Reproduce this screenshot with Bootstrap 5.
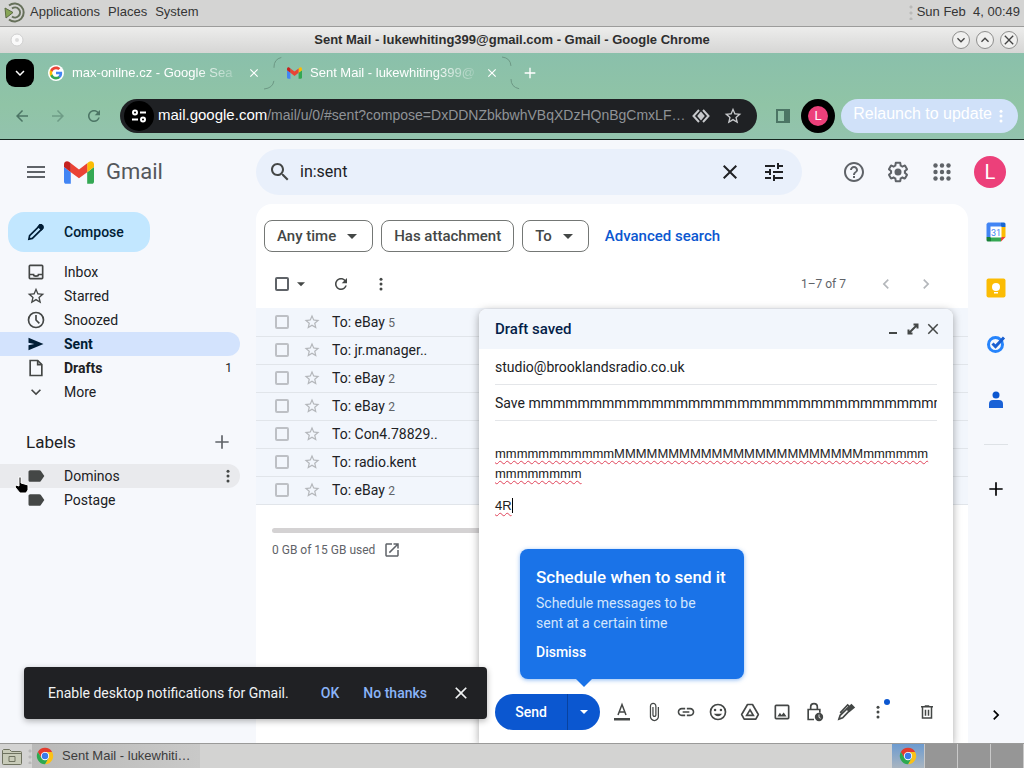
<!DOCTYPE html>
<html lang="en">
<head>
<meta charset="utf-8">
<meta name="viewport" content="width=device-width, initial-scale=1">
<title>Sent Mail - Gmail</title>
<link href="https://cdn.jsdelivr.net/npm/bootstrap@5.3.0/dist/css/bootstrap.min.css" rel="stylesheet">
<style>
  :root { --ink:#202124; --mute:#5f6368; --g:Roboto,"Noto Sans",sans-serif; --sys:"Liberation Sans",Arial,sans-serif; }
  body { font-family:var(--g); font-size:14px; line-height:20px; color:var(--ink); background:#f6f8fc; overflow:hidden; }
  svg { display:block; flex:none; }
  svg:not([fill]) { fill:currentColor; }
  button, input { font:inherit; color:inherit; }
  .btn { --bs-btn-font-size:14px; --bs-btn-line-height:20px; --bs-btn-padding-x:0; --bs-btn-padding-y:0; --bs-btn-border-width:0px; }
  .ib { display:inline-flex; align-items:center; justify-content:center; flex:none; color:inherit; border:0; background:none; padding:0; }
  .s16 { width:16px; height:16px; } .s18 { width:18px; height:18px; } .s20 { width:20px; height:20px; } .s24 { width:24px; height:24px; }
  .ib32 { width:32px; height:32px; } .ib40 { width:40px; height:40px; } .ib36 { width:36px; height:36px; }

  /* desktop panel and window frame */
  .sysbar { height:27px; background:#d4d4d3; border-bottom:1px solid #9c9c9b; font:13px/22px var(--sys); color:#353535; padding-bottom:2px; }
  .sysbar a { color:inherit; text-decoration:none; }
  .titlebar { height:26px; background:linear-gradient(#ededec,#d6d6d5); font:bold 13px/24px var(--sys); color:#2e2e2e; }
  .winbtn { width:18px; height:18px; border:1px solid #8e8e8d; border-radius:50%; background:#f0f0ef; color:#444; }
  .winbtns { gap:6px; padding-right:6px; }
  .grip { width:4px; height:16px; background:radial-gradient(circle,#b9b9b8 1px,transparent 2px) 0 0/4px 6px; }

  /* browser chrome */
  .chrome { background:linear-gradient(#8ac0ab,#90c4a6 60%,#93c3ae); color:#fff; border-bottom:1px solid #15251f; font-family:var(--sys); }
  .tabs { height:39px; padding-left:6px; }
  .tabsearch { width:28px; height:28px; border-radius:9px; background:#000; color:#fff; margin-right:14px; }
  .tabtext { font-size:13px; line-height:18px; white-space:nowrap; -webkit-mask-image:linear-gradient(90deg,#000 75%,rgba(0,0,0,.2) 100%); }
  .tabw { width:164px; }
  .tools { height:47px; color:#4c7565; padding:0 6px 0 4px; }
  .omni { height:34px; border-radius:17px; background:#1f2124; color:#c7c9cc; min-width:0; }
  .url { font:14px/20px var(--sys); color:#8f9397; white-space:nowrap; text-decoration:none; padding-bottom:2px; min-width:0; }
  .url b { color:#fff; font-weight:400; font-size:15px; }
  .siteinfo { width:30px; height:30px; border-radius:50%; background:#000; color:#fff; }
  .profile { width:34px; height:34px; border-radius:50%; background:#000; }
  .face { background:#ec407a; color:#fff; border-radius:50%; display:flex; align-items:center; justify-content:center; }
  .profile .face { font-size:13px; }
  .relaunch { height:34px; border-radius:17px; background:#d0e1f9; color:#fff; font-size:16px; margin-left:6px; }

  /* mail */
  .side { width:256px; flex:none; }
  .wordmark { font-size:22px; line-height:28px; color:#54575b; }
  .searchbox { height:46px; border-radius:23px; background:#e9f0fb; }
  .searchbox input { background:none; border:0; outline:0; font-size:16px; line-height:24px; min-width:0; }
  .compose { height:40px; border-radius:16px; background:#c2e7ff; color:#001d35; font-weight:500; width:142px; padding-left:18px; gap:18px; }
  .navrow { height:24px; margin-right:16px; padding:0 8px 0 26px; border-radius:0 12px 12px 0; color:var(--ink); text-decoration:none; display:flex; align-items:center; gap:18px; }
  .navrow svg { color:#444746; }
  .navrow.on { background:#d3e3fd; font-weight:700; color:#001d35; } .navrow.on svg { color:#001d35; }
  .navrow.hov { background:#e9eaed; padding-right:3px; }
  .heading { font-size:17px; line-height:28px; font-weight:400; }
  .sheet { background:#fff; border-radius:16px 16px 0 0; min-width:0; }
  .chip { height:32px; border:1px solid #747775; border-radius:8px; color:#444746; background:#fff; padding:0 12px; }
  .chip.pick { padding-right:10px; gap:6px; }
  .f15 { font-size:15px; font-weight:500; }
  .t12 { font-size:12px; line-height:16px; }
  .mails td { padding:0; height:28px; vertical-align:middle; border-bottom:1px solid #e1e5ea; }
  .mails { background:#f2f6fc; }
  .box { appearance:none; width:14px; height:14px; border:2px solid #bdc0c5; border-radius:2px; margin:0; display:block; flex:none; background:transparent; }
  .box.dark { border-color:#5f6368; }
  .faint { color:#b4b7bb; }
  .quota { height:5px; border-radius:3px; background:#d4d2d3; }
  .rail { width:56px; flex:none; }
  .railrow { height:56px; }

  /* compose window */
  .draft { position:absolute; right:71px; bottom:0; top:169px; width:474px; background:#fff; border-radius:8px 8px 0 0; box-shadow:0 2px 8px rgba(0,0,0,.35); }
  .drafthead { height:40px; background:#f2f6fc; border-radius:8px 8px 0 0; color:#041e49; padding:0 10px 0 16px; }
  .field { height:36px; border:0; border-bottom:1px solid #e4e6e9; outline:0; padding:1px 0 0; width:100%; border-radius:0; background:none; display:block; }
  .bodytext { font:13px/20px var(--sys); outline:0; padding-top:23px; color:#222; }
  .bodytext p + p { margin-top:12px; }
  .typo { text-decoration:underline wavy #e0445a 1px; text-underline-offset:2px; text-decoration-skip-ink:none; word-break:break-all; }
  .caret { border-right:1px solid #000; }
  .sendrow { height:50px; padding:0 16px 12px; color:#444746; }
  .fmt { padding-left:6px; }
  .sendbar { height:36px; border-radius:18px; background:#0b57d0; color:#fff; overflow:hidden; }
  .sendbar .main { width:72px; }
  .sendbar .more { border-left:1px solid #0842a0; width:33px; }
  .med { font-weight:500; }
  .tipbox { position:absolute; left:41px; bottom:64px; width:224px; height:130px; background:#1a73e8; color:#d2e5fc; border-radius:8px; box-shadow:0 1px 4px rgba(26,115,232,.5); }
  .tipbox::after { content:""; position:absolute; left:55px; bottom:-8px; border:9px solid transparent; border-top-color:#1a73e8; border-bottom:0; }
  .tipbox h2 { font-size:17px; line-height:24px; font-weight:500; color:#fff; white-space:nowrap; }
  .dot { position:absolute; right:4px; top:3px; width:6px; height:6px; border-radius:50%; background:#0b57d0; }
  .snack { position:absolute; left:24px; bottom:24px; height:52px; width:463px; background:#202124; color:#f1f3f4; border-radius:4px; box-shadow:0 2px 6px rgba(0,0,0,.3); }
  .snack .act { color:#8ab4f8; font-weight:500; }
  .pointer { position:absolute; left:14px; top:336px; }

  .taskbar { height:25px; background:#d3d3d2; border-top:1px solid #9a9a99; font:13px/22px var(--sys); color:#3c3c3c; }
  .task { width:168px; background:linear-gradient(90deg,#b9b9b8,#c9c9c8); }
  .desk { width:33px; background:#969696; border-right:1px solid #c9c9c9; }
  .desk.on { background:linear-gradient(#6c9bd0,#a9b5c0); }
</style>
</head>
<body class="vh-100 d-flex flex-column">

<svg width="0" height="0" class="position-absolute" aria-hidden="true">
  <symbol id="i-search" viewBox="0 0 24 24"><path d="M15.5 14h-.79l-.28-.27C15.41 12.59 16 11.11 16 9.5 16 5.91 13.09 3 9.5 3S3 5.91 3 9.5 5.91 16 9.5 16c1.61 0 3.09-.59 4.23-1.57l.27.28v.79l5 4.99L20.49 19l-4.99-5zm-6 0C7.01 14 5 11.99 5 9.5S7.01 5 9.5 5 14 7.01 14 9.5 11.99 14 9.5 14z"/></symbol>
  <symbol id="i-star" viewBox="0 0 24 24"><path d="M22 9.24l-7.19-.62L12 2 9.19 8.63 2 9.24l5.46 4.73L5.82 21 12 17.27 18.18 21l-1.63-7.03L22 9.24zM12 15.4l-3.76 2.27 1-4.28-3.32-2.88 4.38-.38L12 6.1l1.71 4.04 4.38.38-3.32 2.88 1 4.28L12 15.4z"/></symbol>
  <symbol id="i-refresh" viewBox="0 0 24 24"><path d="M17.65 6.35C16.2 4.9 14.21 4 12 4c-4.42 0-7.99 3.58-7.99 8s3.57 8 7.99 8c3.73 0 6.84-2.55 7.73-6h-2.08c-.82 2.33-3.04 4-5.65 4-3.31 0-6-2.69-6-6s2.69-6 6-6c1.66 0 3.14.69 4.22 1.78L13 11h7V4l-2.35 2.35z"/></symbol>
  <symbol id="i-more" viewBox="0 0 24 24"><circle cx="12" cy="5.500" r="2"/><circle cx="12" cy="12" r="2"/><circle cx="12" cy="18.500" r="2"/></symbol>
  <symbol id="i-close" viewBox="0 0 24 24"><path d="M19 6.41L17.59 5 12 10.59 6.41 5 5 6.41 10.59 12 5 17.59 6.41 19 12 13.41 17.59 19 19 17.59 13.41 12z"/></symbol>
  <symbol id="i-tune" viewBox="0 0 24 24"><path d="M3 17v2h6v-2H3zM3 5v2h10V5H3zm10 16v-2h8v-2h-8v-2h-2v6h2zM7 9v2H3v2h4v2h2V9H7zm14 4v-2H11v2h10zm-6-4h2V7h4V5h-4V3h-2v6z"/></symbol>
  <symbol id="i-help" viewBox="0 0 24 24"><path d="M11 18h2v-2h-2v2zm1-16C6.480 2 2 6.480 2 12s4.480 10 10 10 10-4.480 10-10S17.520 2 12 2zm0 18c-4.410 0-8-3.590-8-8s3.590-8 8-8 8 3.590 8 8-3.590 8-8 8zm0-14c-2.210 0-4 1.790-4 4h2c0-1.100.9-2 2-2s2 .9 2 2c0 2-3 1.750-3 5h2c0-2.250 3-2.500 3-5 0-2.210-1.790-4-4-4z"/></symbol>
  <symbol id="i-gear" viewBox="0 0 24 24"><path d="M13.85 22.25h-3.7c-.74 0-1.36-.54-1.45-1.27l-.27-1.89c-.27-.14-.53-.29-.79-.46l-1.8.72c-.7.26-1.47-.03-1.81-.65L2.2 15.53c-.35-.66-.2-1.44.36-1.88l1.53-1.19c-.01-.15-.02-.3-.02-.46 0-.15.01-.31.02-.46l-1.52-1.19c-.59-.45-.74-1.26-.37-1.88l1.85-3.19c.34-.62 1.11-.9 1.79-.63l1.81.73c.26-.17.52-.32.78-.46l.27-1.91c.09-.7.71-1.25 1.44-1.25h3.7c.74 0 1.36.54 1.45 1.27l.27 1.89c.27.14.53.29.79.46l1.8-.72c.71-.26 1.48.03 1.82.65l1.84 3.18c.36.66.2 1.44-.36 1.88l-1.52 1.19c.01.15.02.3.02.46s-.01.31-.02.46l1.52 1.19c.56.45.72 1.23.37 1.86l-1.86 3.22c-.34.62-1.11.9-1.8.63l-1.8-.72c-.26.17-.52.32-.78.46l-.27 1.91c-.1.68-.72 1.22-1.46 1.22zm-3.23-2h2.76l.37-2.55.53-.22c.44-.18.88-.44 1.34-.78l.45-.34 2.38.96 1.38-2.4-2.03-1.58.07-.56c.03-.26.06-.51.06-.78s-.03-.53-.06-.78l-.07-.56 2.03-1.58-1.39-2.4-2.39.96-.45-.35c-.42-.32-.87-.58-1.33-.77l-.52-.22-.37-2.55h-2.76l-.37 2.55-.53.21c-.44.19-.88.44-1.34.79l-.45.33-2.38-.95-1.39 2.39 2.03 1.58-.07.56a7 7 0 0 0-.06.79c0 .26.02.53.06.78l.07.56-2.03 1.58 1.38 2.4 2.39-.96.45.35c.43.33.86.58 1.33.77l.53.22.38 2.55z"/><circle cx="12" cy="12" r="3.500"/></symbol>
  <symbol id="i-grid" viewBox="0 0 24 24"><circle cx="5.500" cy="5.500" r="2.200"/><circle cx="12" cy="5.500" r="2.200"/><circle cx="18.500" cy="5.500" r="2.200"/><circle cx="5.500" cy="12" r="2.200"/><circle cx="12" cy="12" r="2.200"/><circle cx="18.500" cy="12" r="2.200"/><circle cx="5.500" cy="18.500" r="2.200"/><circle cx="12" cy="18.500" r="2.200"/><circle cx="18.500" cy="18.500" r="2.200"/></symbol>
  <symbol id="i-left" viewBox="0 0 24 24"><path d="M15.410 7.410 14 6l-6 6 6 6 1.410-1.410L10.830 12z"/></symbol>
  <symbol id="i-right" viewBox="0 0 24 24"><path d="M8.590 7.410 10 6l6 6-6 6-1.410-1.410L13.170 12z"/></symbol>
  <symbol id="i-down" viewBox="0 0 24 24"><path d="M7.410 8.590 12 13.170l4.590-4.580L18 10l-6 6-6-6z"/></symbol>
  <symbol id="i-up" viewBox="0 0 24 24"><path d="M7.410 15.410 12 10.830l4.590 4.580L18 14l-6-6-6 6z"/></symbol>
  <symbol id="i-drop" viewBox="0 0 24 24"><path d="M6 9.500l6 6 6-6z"/></symbol>
  <symbol id="i-plus" viewBox="0 0 24 24"><path d="M20 13h-7v7h-2v-7H4v-2h7V4h2v7h7z"/></symbol>
  <symbol id="i-back" viewBox="0 0 24 24"><path d="M20 11H7.830l5.590-5.590L12 4l-8 8 8 8 1.410-1.410L7.830 13H20v-2z"/></symbol>
  <symbol id="i-label" viewBox="0 0 24 24"><path d="M17.630 5.840C17.270 5.330 16.670 5 16 5L5 5.010C3.900 5.010 3 5.900 3 7v10c0 1.100.9 1.990 2 1.990L16 19c.670 0 1.270-.330 1.630-.840L22 12z"/></symbol>
  <symbol id="i-g" viewBox="0 0 24 24"><path fill="#4285f4" d="M22.560 12.250c0-.780-.070-1.530-.200-2.250H12v4.260h5.920c-.260 1.370-1.040 2.530-2.210 3.310v2.770h3.570c2.080-1.920 3.280-4.740 3.280-8.090z"/><path fill="#34a853" d="M12 23c2.970 0 5.460-.980 7.280-2.660l-3.570-2.770c-.980.660-2.230 1.060-3.710 1.060-2.860 0-5.290-1.930-6.160-4.530H2.180v2.840C3.990 20.530 7.700 23 12 23z"/><path fill="#fbbc05" d="M5.840 14.090c-.220-.660-.350-1.360-.350-2.090s.130-1.430.350-2.090V7.070H2.180C1.430 8.550 1 10.220 1 12s.430 3.450 1.180 4.930z"/><path fill="#ea4335" d="M12 5.380c1.620 0 3.060.560 4.210 1.640l3.150-3.150C17.450 2.090 14.970 1 12 1 7.700 1 3.990 3.470 2.180 7.070l3.660 2.840c.870-2.600 3.300-4.530 6.160-4.530z"/></symbol>
  <symbol id="i-gmail" viewBox="52 42 88 66"><path fill="#4285f4" d="M58 108h14V74L52 59v43c0 3.320 2.690 6 6 6"/><path fill="#34a853" d="M120 108h14c3.320 0 6-2.690 6-6V59l-20 15"/><path fill="#fbbc04" d="M120 48v26l20-15v-8c0-7.420-8.470-11.650-14.400-7.200"/><path fill="#ea4335" d="M72 74V48l24 18 24-18v26L96 92"/><path fill="#c5221f" d="M52 51v8l20 15V48l-5.600-4.200c-5.940-4.450-14.400-.220-14.400 7.200"/></symbol>
  <symbol id="i-chrome" viewBox="0 0 24 24"><path fill="#e33b2e" d="M12 1a11 11 0 0 1 9.500 5.500H12a5.500 5.500 0 0 0-4.800 2.700L2.500 6.500A11 11 0 0 1 12 1z"/><path fill="#e33b2e" d="M2.500 6.500 7.200 14.700 12 6.500z"/><path fill="#fbc116" d="M21.500 6.500A11 11 0 0 1 12 23l4.800-8.300A5.500 5.500 0 0 0 12 6.500z"/><path fill="#2da94f" d="M2.500 6.500A11 11 0 0 0 12 23l4.800-8.300a5.500 5.500 0 0 1-9.600 0z"/><circle cx="12" cy="12" r="5.500" fill="#fff"/><circle cx="12" cy="12" r="4.300" fill="#3a7bea"/></symbol>
</svg>

<header class="sysbar d-flex align-items-center ps-1">
  <svg width="22" height="22" viewBox="0 0 22 22" fill="none" stroke="#66705a" stroke-width="2"><path d="M5 4.500a9 9 0 1 1 0 14"/><path d="M8 7.500a5 5 0 1 1 0 8"/><path d="M1 7l8 4.500L2 17z" fill="#87a556" stroke="#5c6a45" stroke-width="1"/></svg>
  <nav class="d-flex gap-2 ms-1 flex-fill"><a href="#">Applications</a><a href="#">Places</a><a href="#">System</a></nav>
  <span class="grip me-1"></span><span class="pe-1">Sun Feb&nbsp; 4, 00:49</span>
</header>

<div class="titlebar d-flex align-items-center">
  <div class="flex-fill w-25 ps-2"><svg class="s18" viewBox="0 0 18 18"><circle cx="9" cy="9" r="6" fill="#fafafa" stroke="#d0d0d0"/><circle cx="9" cy="9" r="2" fill="#ddd"/></svg></div>
  <div class="text-nowrap">Sent Mail - lukewhiting399@gmail.com - Gmail - Google Chrome</div>
  <div class="flex-fill w-25 d-flex justify-content-end winbtns">
    <button class="ib winbtn" aria-label="Minimise"><svg class="s16"><use href="#i-down"/></svg></button>
    <button class="ib winbtn" aria-label="Maximise"><svg class="s16"><use href="#i-up"/></svg></button>
    <button class="ib winbtn" aria-label="Close"><svg class="s16"><use href="#i-close"/></svg></button>
  </div>
</div>

<div class="chrome">
  <div class="tabs d-flex align-items-center">
    <button class="ib tabsearch" aria-label="Search tabs"><svg class="s18"><use href="#i-down"/></svg></button>
    <span class="ib s16 bg-white rounded-circle"><svg width="14" height="14"><use href="#i-g"/></svg></span>
    <span class="tabtext tabw ms-2">max-onilne.cz - Google Sea</span>
    <button class="ib s16 ms-2 me-1 ps-1" aria-label="Close tab"><svg width="14" height="14"><use href="#i-close"/></svg></button>
    <svg width="22" height="36" viewBox="0 0 22 36" fill="none" stroke="#6d9885"><path d="M0 34q10-1 10-10V12q0-9 10-10" stroke-dasharray="14 13 14"/></svg>
    <span class="ib s16"><svg width="15" height="12"><use href="#i-gmail"/></svg></span>
    <span class="tabtext tabw ms-2">Sent Mail - lukewhiting399@</span>
    <button class="ib s16 ms-2 ps-1 me-1" aria-label="Close tab"><svg width="14" height="14"><use href="#i-close"/></svg></button>
    <svg width="20" height="36" viewBox="0 0 20 36" fill="none" stroke="#6d9885"><path d="M0 2q9 1 9 10v12q0 9 10 10" stroke-dasharray="14 13 14"/></svg>
    <button class="ib s16" aria-label="New tab"><svg class="s16"><use href="#i-plus"/></svg></button>
  </div>
  <div class="tools d-flex align-items-center">
    <button class="ib ib36" aria-label="Back"><svg class="s18"><use href="#i-back"/></svg></button>
    <button class="ib ib36 opacity-50" aria-label="Forward"><svg class="s18" viewBox="0 0 24 24"><path d="M4 11h12.170l-5.590-5.590L12 4l8 8-8 8-1.410-1.410L16.170 13H4z"/></svg></button>
    <button class="ib ib36" aria-label="Reload"><svg class="s18"><use href="#i-refresh"/></svg></button>
    <div class="omni d-flex align-items-center flex-fill ms-2 ps-1">
      <button class="ib siteinfo" aria-label="Site information"><svg class="s16" viewBox="0 0 16 16" fill="none" stroke="#fff" stroke-width="2"><circle cx="4" cy="4.500" r="2"/><path d="M9 4.500h6M1 11.500h6"/><circle cx="12" cy="11.500" r="2"/></svg></button>
      <a class="url flex-fill ms-1" href="#"><b>mail.google.com</b>/mail/u/0/#sent?compose=DxDDNZbkbwhVBqXDzHQnBgCmxLF…</a>
      <button class="ib ib32" aria-label="Media"><svg class="s18" viewBox="0 0 18 18" fill="none" stroke="#c7c9cc" stroke-width="2"><path d="M7 3 1.500 9 7 15M11 3l5.500 6-5.500 6"/><path d="M9 6 6.500 9 9 12l2.500-3z" fill="#c7c9cc"/></svg></button>
      <button class="ib ib32 me-2" aria-label="Bookmark"><svg class="s20"><use href="#i-star"/></svg></button>
    </div>
    <button class="ib ib36 ms-2" aria-label="Side panel"><svg class="s16" viewBox="0 0 16 16"><path fill="none" stroke="currentColor" stroke-width="2" d="M2 2h12v12H2z"/><path d="M9 2h6v12H9z"/></svg></button>
    <button class="ib profile" aria-label="Profile"><span class="face s20">L</span></button>
    <button class="relaunch border-0 d-flex align-items-center ps-2 pe-2 text-nowrap"><span class="ms-1 pb-1">Relaunch to update</span><svg class="s18"><use href="#i-more"/></svg></button>
  </div>
</div>

<div class="flex-fill d-flex flex-column position-relative overflow-hidden">
  <div class="d-flex align-items-center" style="height:64px">
    <div class="side d-flex align-items-center ps-3">
      <button class="ib ib40" aria-label="Main menu"><svg class="s24" viewBox="0 0 24 24" style="color:#5f6368"><path d="M3 18h18v-2H3v2zm0-5h18v-2H3v2zm0-7v2h18V6H3z"/></svg></button>
      <svg width="30" height="23" class="ms-2 me-2"><use href="#i-gmail"/></svg>
      <span class="wordmark ms-1">Gmail</span>
    </div>
    <div class="searchbox flex-fill d-flex align-items-center px-1">
      <button class="ib ib40" aria-label="Search mail" style="color:#444746"><svg class="s24"><use href="#i-search"/></svg></button>
      <input class="flex-fill p-0" aria-label="Search" value="in:sent">
      <button class="ib ib40 me-1" aria-label="Clear"><svg class="s24"><use href="#i-close"/></svg></button>
      <button class="ib ib40 me-1" aria-label="Search options"><svg class="s24"><use href="#i-tune"/></svg></button>
    </div>
    <div class="d-flex align-items-center gap-1 ps-4 ms-2" style="color:#5f6368;padding-right:18px">
      <button class="ib ib40" aria-label="Help"><svg class="s24"><use href="#i-help"/></svg></button>
      <button class="ib ib40" aria-label="Settings"><svg class="s24"><use href="#i-gear"/></svg></button>
      <button class="ib ib40" aria-label="Apps"><svg class="s24"><use href="#i-grid"/></svg></button>
      <button class="face border-0 ib32 ms-2 fs-5 p-0" aria-label="Account">L</button>
    </div>
  </div>

  <div class="flex-fill d-flex">
    <nav class="side pt-2">
      <button class="compose border-0 d-flex align-items-center ms-2 mb-2"><svg class="s20" viewBox="0 0 24 24" fill="none" stroke="currentColor" stroke-width="2"><path d="M3.500 20.500l.8-4L16.500 4.300q1.300-1 2.500 0l.8.800q1 1.200 0 2.500L7.600 19.700z"/><path d="M15 5.500 18.600 9l1.500-1.500V5L18.500 3.500h-2z" fill="currentColor"/></svg>Compose</button>
      <a href="#" class="navrow"><svg class="s20" viewBox="0 0 24 24" fill="none" stroke="currentColor" stroke-width="2"><rect x="4" y="4" width="16" height="16" rx="1"/><path d="M4 15h5q0 2 3 2t3-2h5"/></svg>Inbox</a>
      <a href="#" class="navrow"><svg class="s20"><use href="#i-star"/></svg>Starred</a>
      <a href="#" class="navrow"><svg class="s20" viewBox="0 0 24 24" fill="none" stroke="currentColor" stroke-width="2"><circle cx="12" cy="12" r="9"/><path d="M12 6v6l4 4"/></svg>Snoozed</a>
      <a href="#" class="navrow on"><svg class="s20" viewBox="0 0 24 24"><path d="M3 19.500v-6L10 12 3 10.500v-6L21 12z"/></svg>Sent</a>
      <a href="#" class="navrow"><svg class="s20" viewBox="0 0 24 24" fill="none" stroke="currentColor" stroke-width="2"><path d="M5 3h9l5 5v13H5V3z"/><path d="M14 3v5h5"/></svg><b class="flex-fill">Drafts</b><span class="t12">1</span></a>
      <a href="#" class="navrow"><svg class="s20"><use href="#i-down"/></svg>More</a>
      <div class="d-flex align-items-center justify-content-between pt-4 pb-2" style="padding-left:26px;padding-right:24px">
        <h2 class="m-0 heading">Labels</h2>
        <button class="ib s20" aria-label="Create label"><svg class="s20" style="color:#5f6368"><use href="#i-plus"/></svg></button>
      </div>
      <a href="#" class="navrow hov"><svg class="s20"><use href="#i-label"/></svg><span class="flex-fill">Dominos</span><svg class="s18"><use href="#i-more"/></svg></a>
      <a href="#" class="navrow"><svg class="s20"><use href="#i-label"/></svg>Postage</a>
    </nav>

    <main class="sheet flex-fill d-flex flex-column">
      <div class="d-flex align-items-center gap-2 px-2 pt-3 f15">
        <button class="chip pick d-flex align-items-center">Any time<svg class="s20" viewBox="0 0 20 20"><path d="M5 8l5 5 5-5z"/></svg></button>
        <button class="chip">Has attachment</button>
        <button class="chip pick d-flex align-items-center">To<svg class="s20" viewBox="0 0 20 20"><path d="M5 8l5 5 5-5z"/></svg></button>
        <a href="#" class="text-decoration-none ms-2" style="color:#0b57d0">Advanced search</a>
      </div>
      <div class="d-flex align-items-center pt-3 pb-2" style="padding-left:19px;padding-right:26px;color:#444746">
        <input type="checkbox" class="box dark" aria-label="Select all">
        <svg class="s16 ms-1 me-3"><use href="#i-drop"/></svg>
        <button class="ib ib32" aria-label="Refresh"><svg class="s18"><use href="#i-refresh"/></svg></button>
        <button class="ib ib32 ms-2" aria-label="More"><svg class="s18"><use href="#i-more"/></svg></button>
        <span class="t12 ms-auto me-4" style="color:#5f6368">1–7 of 7</span>
        <button class="ib ib32 faint" aria-label="Newer"><svg class="s20"><use href="#i-left"/></svg></button>
        <button class="ib ib32 faint ms-2" aria-label="Older"><svg class="s20"><use href="#i-right"/></svg></button>
      </div>
      <table class="mails w-100"><tbody id="rows"></tbody></table>
      <div class="px-3" style="padding-top:23px">
        <div class="quota"></div>
        <div class="d-flex align-items-center gap-2 mt-2 t12" style="color:#5f6368"><span>0 GB of 15 GB used</span><a href="#" class="text-reset" aria-label="Manage storage"><svg class="s18" viewBox="0 0 24 24"><path d="M19 19H5V5h7V3H5c-1.110 0-2 .9-2 2v14c0 1.100.890 2 2 2h14c1.100 0 2-.9 2-2v-7h-2v7zM14 3v2h3.590l-9.830 9.830 1.410 1.410L19 6.410V10h2V3h-7z"/></svg></a></div>
      </div>
    </main>

    <aside class="rail d-flex flex-column align-items-center">
      <button class="ib railrow" aria-label="Calendar"><svg class="s20" viewBox="0 0 20 20"><path fill="#4285f4" d="M2 .500h13V5H5v10H.500V2z"/><path fill="#fbbc04" d="M15 5h4.500v10H15z"/><path fill="#1967d2" d="M15 .500h3q1.500 0 1.500 1.500v3H15z"/><path fill="#34a853" d="M5 15h10v4.500H5z"/><path fill="#188038" d="M.500 15H5v4.500H2q-1.500 0-1.500-1.500z"/><path fill="#ea4335" d="M15 19.500V15h4.500z"/><path fill="#fff" d="M4.500 4.500h11v11h-11z"/><text x="10" y="13.500" font-size="9" text-anchor="middle" fill="#4285f4">31</text></svg></button>
      <button class="ib railrow" aria-label="Keep"><svg class="s20" viewBox="0 0 20 20"><rect x=".500" y=".500" width="19" height="19" rx="2" fill="#fbbc04"/><circle cx="10" cy="9" r="4" fill="#fff"/><path fill="#fff" d="M8 14h4v1.500H8z"/></svg></button>
      <button class="ib railrow" aria-label="Tasks"><svg class="s20" viewBox="0 0 20 20" fill="none"><circle cx="9.500" cy="10.500" r="7" stroke="#2684fc" stroke-width="3"/><path d="M6.500 9.500l3 3 8.500-9" stroke="#1a5fd0" stroke-width="3"/></svg></button>
      <button class="ib railrow" aria-label="Contacts"><svg class="s20" viewBox="0 0 20 20"><circle cx="10" cy="5" r="3.500" fill="#0b57d0"/><path fill="#1a62d6" d="M3 14q0-4 4-4h6q4 0 4 4v4H3z"/></svg></button>
      <div class="border-top my-3" style="width:24px"></div>
      <button class="ib railrow text-black" aria-label="Get add-ons"><svg class="s20"><use href="#i-plus"/></svg></button>
      <button class="ib railrow mt-auto text-black" aria-label="Hide panel"><svg class="s20"><use href="#i-right"/></svg></button>
    </aside>
  </div>

  <section class="draft d-flex flex-column">
    <div class="drafthead d-flex align-items-center">
      <span class="flex-fill f15">Draft saved</span>
      <span class="d-flex" style="color:#444746">
      <button class="ib s20" aria-label="Minimise"><svg class="s16" viewBox="0 0 16 16"><path d="M4 11h8v2H4z"/></svg></button>
      <button class="ib s20" aria-label="Full screen"><svg class="s16" viewBox="0 0 16 16" fill="none" stroke="currentColor" stroke-width="2"><path d="M8.500 3.500h4v4M12 4 4 12M3.500 8.500v4h4"/></svg></button>
      <button class="ib s20" aria-label="Close"><svg class="s18"><use href="#i-close"/></svg></button></span>
    </div>
    <div class="px-3 flex-fill">
      <input class="field" aria-label="To" value="studio@brooklandsradio.co.uk">
      <input class="field" aria-label="Subject" value="Save mmmmmmmmmmmmmmmmmmmmmmmmmmmmmmmmmmmmmmmmmmmm">
      <div class="bodytext" contenteditable="true" role="textbox" aria-label="Message" spellcheck="false"><p class="mb-0 typo">mmmmmmmmmmmMMMMMMMMMMMMMMMMMMMMMMMmmmmmmmmmmmmmm</p><p class="mb-0"><span class="typo caret">4R</span></p></div>
    </div>
    <div class="d-flex align-items-center sendrow">
      <div class="sendbar d-flex"><button class="btn main text-reset med rounded-0">Send</button><button class="ib more" aria-label="More send options"><svg class="s16" viewBox="0 0 16 16"><path d="M4 6l4 4 4-4z"/></svg></button></div>
      <div class="d-flex flex-fill fmt">
        <button class="ib ib32" aria-label="Formatting"><svg class="s20" viewBox="0 0 20 20"><path d="M2 16h16v2.500H2z"/><path fill="none" stroke="currentColor" stroke-width="1.500" d="M6 13 10 2.500 14 13M7 10h6"/></svg></button>
        <button class="ib ib32" aria-label="Attach"><svg class="s20" viewBox="0 0 24 24"><path d="M16.500 6v11.500c0 2.210-1.790 4-4 4s-4-1.790-4-4V5c0-1.380 1.120-2.500 2.500-2.500s2.500 1.120 2.500 2.500v10.500c0 .550-.450 1-1 1s-1-.450-1-1V6H10v9.500c0 1.380 1.120 2.500 2.500 2.500s2.500-1.120 2.500-2.500V5c0-2.210-1.790-4-4-4S7 2.790 7 5v12.500c0 3.040 2.460 5.500 5.500 5.500s5.500-2.460 5.500-5.500V6h-1.500z"/></svg></button>
        <button class="ib ib32" aria-label="Insert link"><svg class="s20" viewBox="0 0 24 24"><path d="M3.900 12c0-1.710 1.390-3.100 3.100-3.100h4V7H7c-2.760 0-5 2.240-5 5s2.240 5 5 5h4v-1.900H7c-1.710 0-3.100-1.390-3.100-3.100zM8 13h8v-2H8v2zm9-6h-4v1.900h4c1.710 0 3.100 1.390 3.100 3.100s-1.390 3.100-3.100 3.100h-4V17h4c2.760 0 5-2.240 5-5s-2.240-5-5-5z"/></svg></button>
        <button class="ib ib32" aria-label="Emoji"><svg class="s20" viewBox="0 0 24 24"><circle cx="12" cy="12" r="9" fill="none" stroke="currentColor" stroke-width="2"/><circle cx="8.500" cy="9.500" r="1.500"/><circle cx="15.500" cy="9.500" r="1.500"/><path d="M7 14q5 6 10 0z"/></svg></button>
        <button class="ib ib32" aria-label="Drive"><svg class="s20" viewBox="0 0 24 24" fill="none" stroke="currentColor" stroke-width="2"><path d="M9 3h6l7 12-3 5.500H5L2 15z" stroke-linejoin="round"/><path d="M12 9.500 8 16h8z"/></svg></button>
        <button class="ib ib32" aria-label="Photo"><svg class="s20" viewBox="0 0 24 24"><rect x="4" y="4" width="16" height="16" rx="1" fill="none" stroke="currentColor" stroke-width="2"/><path d="M6.500 17.500 9.500 13l2 2.500 2.500-3 3.500 5z"/></svg></button>
        <button class="ib ib32" aria-label="Confidential mode"><svg class="s20" viewBox="0 0 24 24"><path fill="none" stroke="currentColor" stroke-width="2" d="M12 21H5V9h14v4M8 9V6q0-4 4-4t4 4v3"/><circle cx="18" cy="18" r="5"/><path d="M18 15v3.500l2 1" stroke="#fff" fill="none"/></svg></button>
        <button class="ib ib32" aria-label="Signature"><svg class="s20" viewBox="0 0 24 24" fill="none" stroke="currentColor" stroke-width="2"><path d="M3.500 20.500 5 16 16 5.500 18.500 8 8 19zM5 13l9-9.500 2 2"/><path d="M13 8.500 18.500 3.500l3 3L16 11z" fill="currentColor"/></svg></button>
        <button class="ib ib32 position-relative" aria-label="More options"><svg class="s18"><use href="#i-more"/></svg><span class="dot"></span></button>
      </div>
      <button class="ib s20" aria-label="Discard"><svg class="s18" viewBox="0 0 24 24" fill="none" stroke="currentColor" stroke-width="2"><path d="M4 5h16M9 4h6M6 6v14h12V6M10 9v8M14 9v8"/></svg></button>
    </div>
    <div class="tipbox p-3">
      <h2 class="mb-0">Schedule when to send it</h2>
      <p class="mb-2 pt-1 pe-3">Schedule messages to be sent at a certain time</p>
      <button class="btn text-white med">Dismiss</button>
    </div>
  </section>

  <div class="snack d-flex align-items-center ps-4 pe-3">
    <span class="flex-fill text-nowrap">Enable desktop notifications for Gmail.</span>
    <button class="btn act me-4">OK</button><button class="btn act me-4">No thanks</button>
    <button class="ib s20" aria-label="Close"><svg class="s20"><use href="#i-close"/></svg></button>
  </div>

  <svg class="pointer" width="16" height="18" viewBox="0 0 16 18"><path d="M5 1h2v6l7 2v5l-2 3H6l-5-6 1-2 3 1z" fill="#000" stroke="#fff"/></svg>
</div>

<footer class="taskbar d-flex">
  <svg width="24" height="24" viewBox="0 0 24 24" fill="#c8cbb8" stroke="#6e725f"><path d="M3.500 5.500h6l2 2h9q1 0 1 1v11q0 1-1 1h-17q-1 0-1-1v-13z"/><path d="M2.500 9.500h19M9 12.500h6v5H9z"/></svg>
  <span class="grip ms-1 mt-1"></span>
  <button class="task border-0 d-flex align-items-center gap-2 ps-1 pe-0 text-nowrap"><svg class="s18"><use href="#i-chrome"/></svg>Sent Mail - lukewhiti…</button>
  <div class="ms-auto d-flex"><span class="desk on ib"><svg class="s18"><use href="#i-chrome"/></svg></span><span class="desk"></span><span class="desk"></span><span class="desk"></span></div>
</footer>

<script>
  const mails = [["eBay",5],["jr.manager.."],["eBay",2],["eBay",2],["Con4.78829.."],["radio.kent"],["eBay",2]];
  document.getElementById("rows").innerHTML = mails.map(([who, n]) =>
    `<tr><td><div class="d-flex align-items-center" style="padding-left:19px">
      <input type="checkbox" class="box" aria-label="Select ${who}">
      <button class="ib s20 faint" aria-label="Star" style="margin:0 10px 0 13px"><svg class="s18"><use href="#i-star"/></svg></button>
      <span>To: ${who}${n ? ` <span class="t12" style="color:#5f6368">${n}</span>` : ""}</span></div></td></tr>`).join("");
</script>
<script src="https://cdn.jsdelivr.net/npm/bootstrap@5.3.0/dist/js/bootstrap.bundle.min.js"></script>
</body>
</html>
